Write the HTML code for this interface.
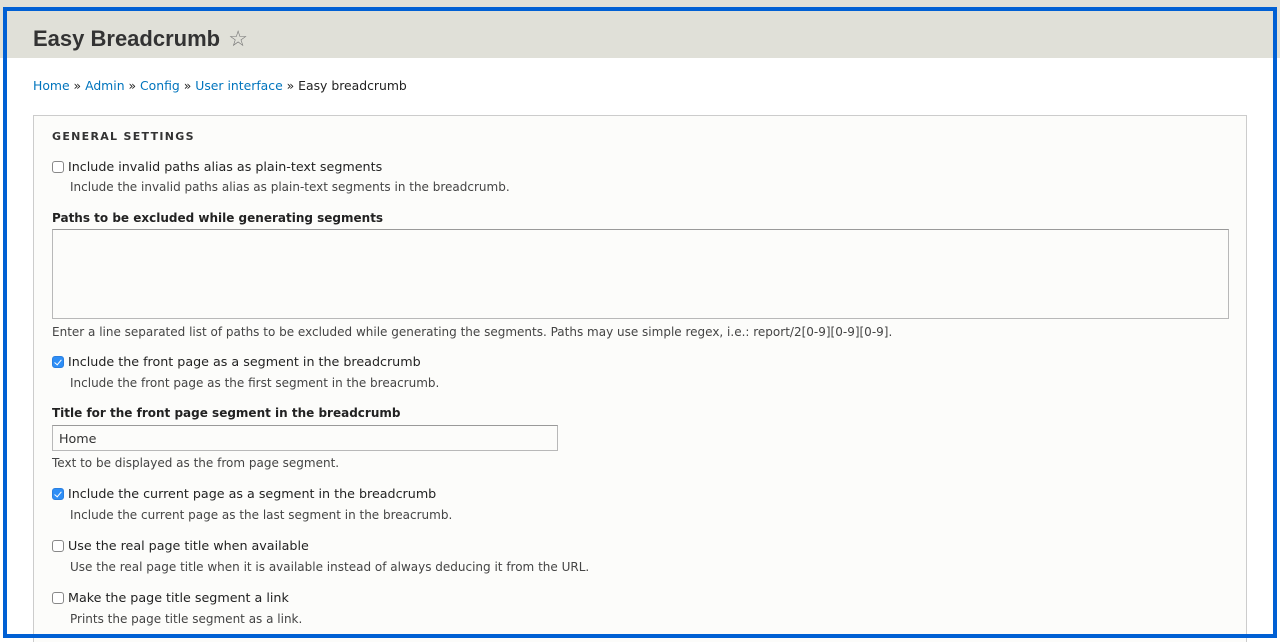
<!DOCTYPE html>
<html><head><style>
*{margin:0;padding:0;box-sizing:border-box}
html,body{width:1280px;height:642px;overflow:hidden}
body{background:#fff;font-family:"DejaVu Sans",sans-serif;color:#222;position:relative}
.hdr{position:absolute;left:0;top:0;width:1280px;height:58px;background:#e0e0d8}
.frame{position:absolute;left:3px;top:7px;width:1274px;height:631px;border:4px solid #0060d4;z-index:5}
.a{position:absolute;white-space:nowrap}
h1{position:absolute;left:33px;top:26px;font-size:22px;font-weight:bold;color:#333;font-family:"Liberation Sans",sans-serif}
.bc{left:33px;top:78px;font-size:12.4px;color:#222}
.bc a{color:#0074bd;text-decoration:none}
.fs{position:absolute;left:33px;top:115px;width:1214px;height:540px;background:#fcfcfa;border:1px solid #ccc}
.lg{left:52px;top:130px;font-size:11px;font-weight:bold;letter-spacing:1.3px;color:#333}
.lb{font-size:12.7px;color:#222}
.d{font-size:12px;color:#444;left:70px}
.b{font-size:12px;font-weight:bold;color:#222;left:52px}
.cb{position:absolute;left:52px;width:12px;height:12px;border:1px solid #888;border-radius:3px;background:#fff}
.cb.on{background:#2e8ef6;border-color:#2a7fe0}
.cb.on:after{content:"";position:absolute;left:3px;top:1px;width:3px;height:6px;border:solid #fff;border-width:0 1.5px 1.5px 0;transform:rotate(40deg)}
.box{position:absolute;border:1px solid #b8b8b8;border-top-color:#999;background:#fcfcfa}
</style></head><body>
<div class="hdr"></div>
<div class="frame"></div>
<h1>Easy Breadcrumb <span style="font-weight:normal;font-size:22px;color:#777;position:relative;left:2px">☆</span></h1>
<div class="a bc" style="top:78px">
<a>Home</a> » <a>Admin</a> » <a>Config</a> » <a>User interface</a> » Easy breadcrumb</div>
<div class="fs"></div>
<div class="a lg">GENERAL SETTINGS</div>
<div class="cb" style="top:161px"></div>
<div class="a lb" style="left:68px;top:159px">Include invalid paths alias as plain-text segments</div>
<div class="a d" style="top:180px">Include the invalid paths alias as plain-text segments in the breadcrumb.</div>
<div class="a b" style="top:211px">Paths to be excluded while generating segments</div>
<div class="box" style="left:52px;top:229px;width:1177px;height:90px"></div>
<div class="a d" style="left:52px;top:325px">Enter a line separated list of paths to be excluded while generating the segments. Paths may use simple regex, i.e.: report/2[0-9][0-9][0-9].</div>
<div class="cb on" style="top:356px"></div>
<div class="a lb" style="left:68px;top:354px">Include the front page as a segment in the breadcrumb</div>
<div class="a d" style="top:376px">Include the front page as the first segment in the breacrumb.</div>
<div class="a b" style="top:406px">Title for the front page segment in the breadcrumb</div>
<div class="box" style="left:52px;top:425px;width:506px;height:26px"></div>
<div class="a lb" style="left:59px;top:431px;color:#333">Home</div>
<div class="a d" style="left:52px;top:456px">Text to be displayed as the from page segment.</div>
<div class="cb on" style="top:488px"></div>
<div class="a lb" style="left:68px;top:486px">Include the current page as a segment in the breadcrumb</div>
<div class="a d" style="top:508px">Include the current page as the last segment in the breacrumb.</div>
<div class="cb" style="top:540px"></div>
<div class="a lb" style="left:68px;top:538px">Use the real page title when available</div>
<div class="a d" style="top:560px">Use the real page title when it is available instead of always deducing it from the URL.</div>
<div class="cb" style="top:592px"></div>
<div class="a lb" style="left:68px;top:590px">Make the page title segment a link</div>
<div class="a d" style="top:612px">Prints the page title segment as a link.</div>
</body></html>
